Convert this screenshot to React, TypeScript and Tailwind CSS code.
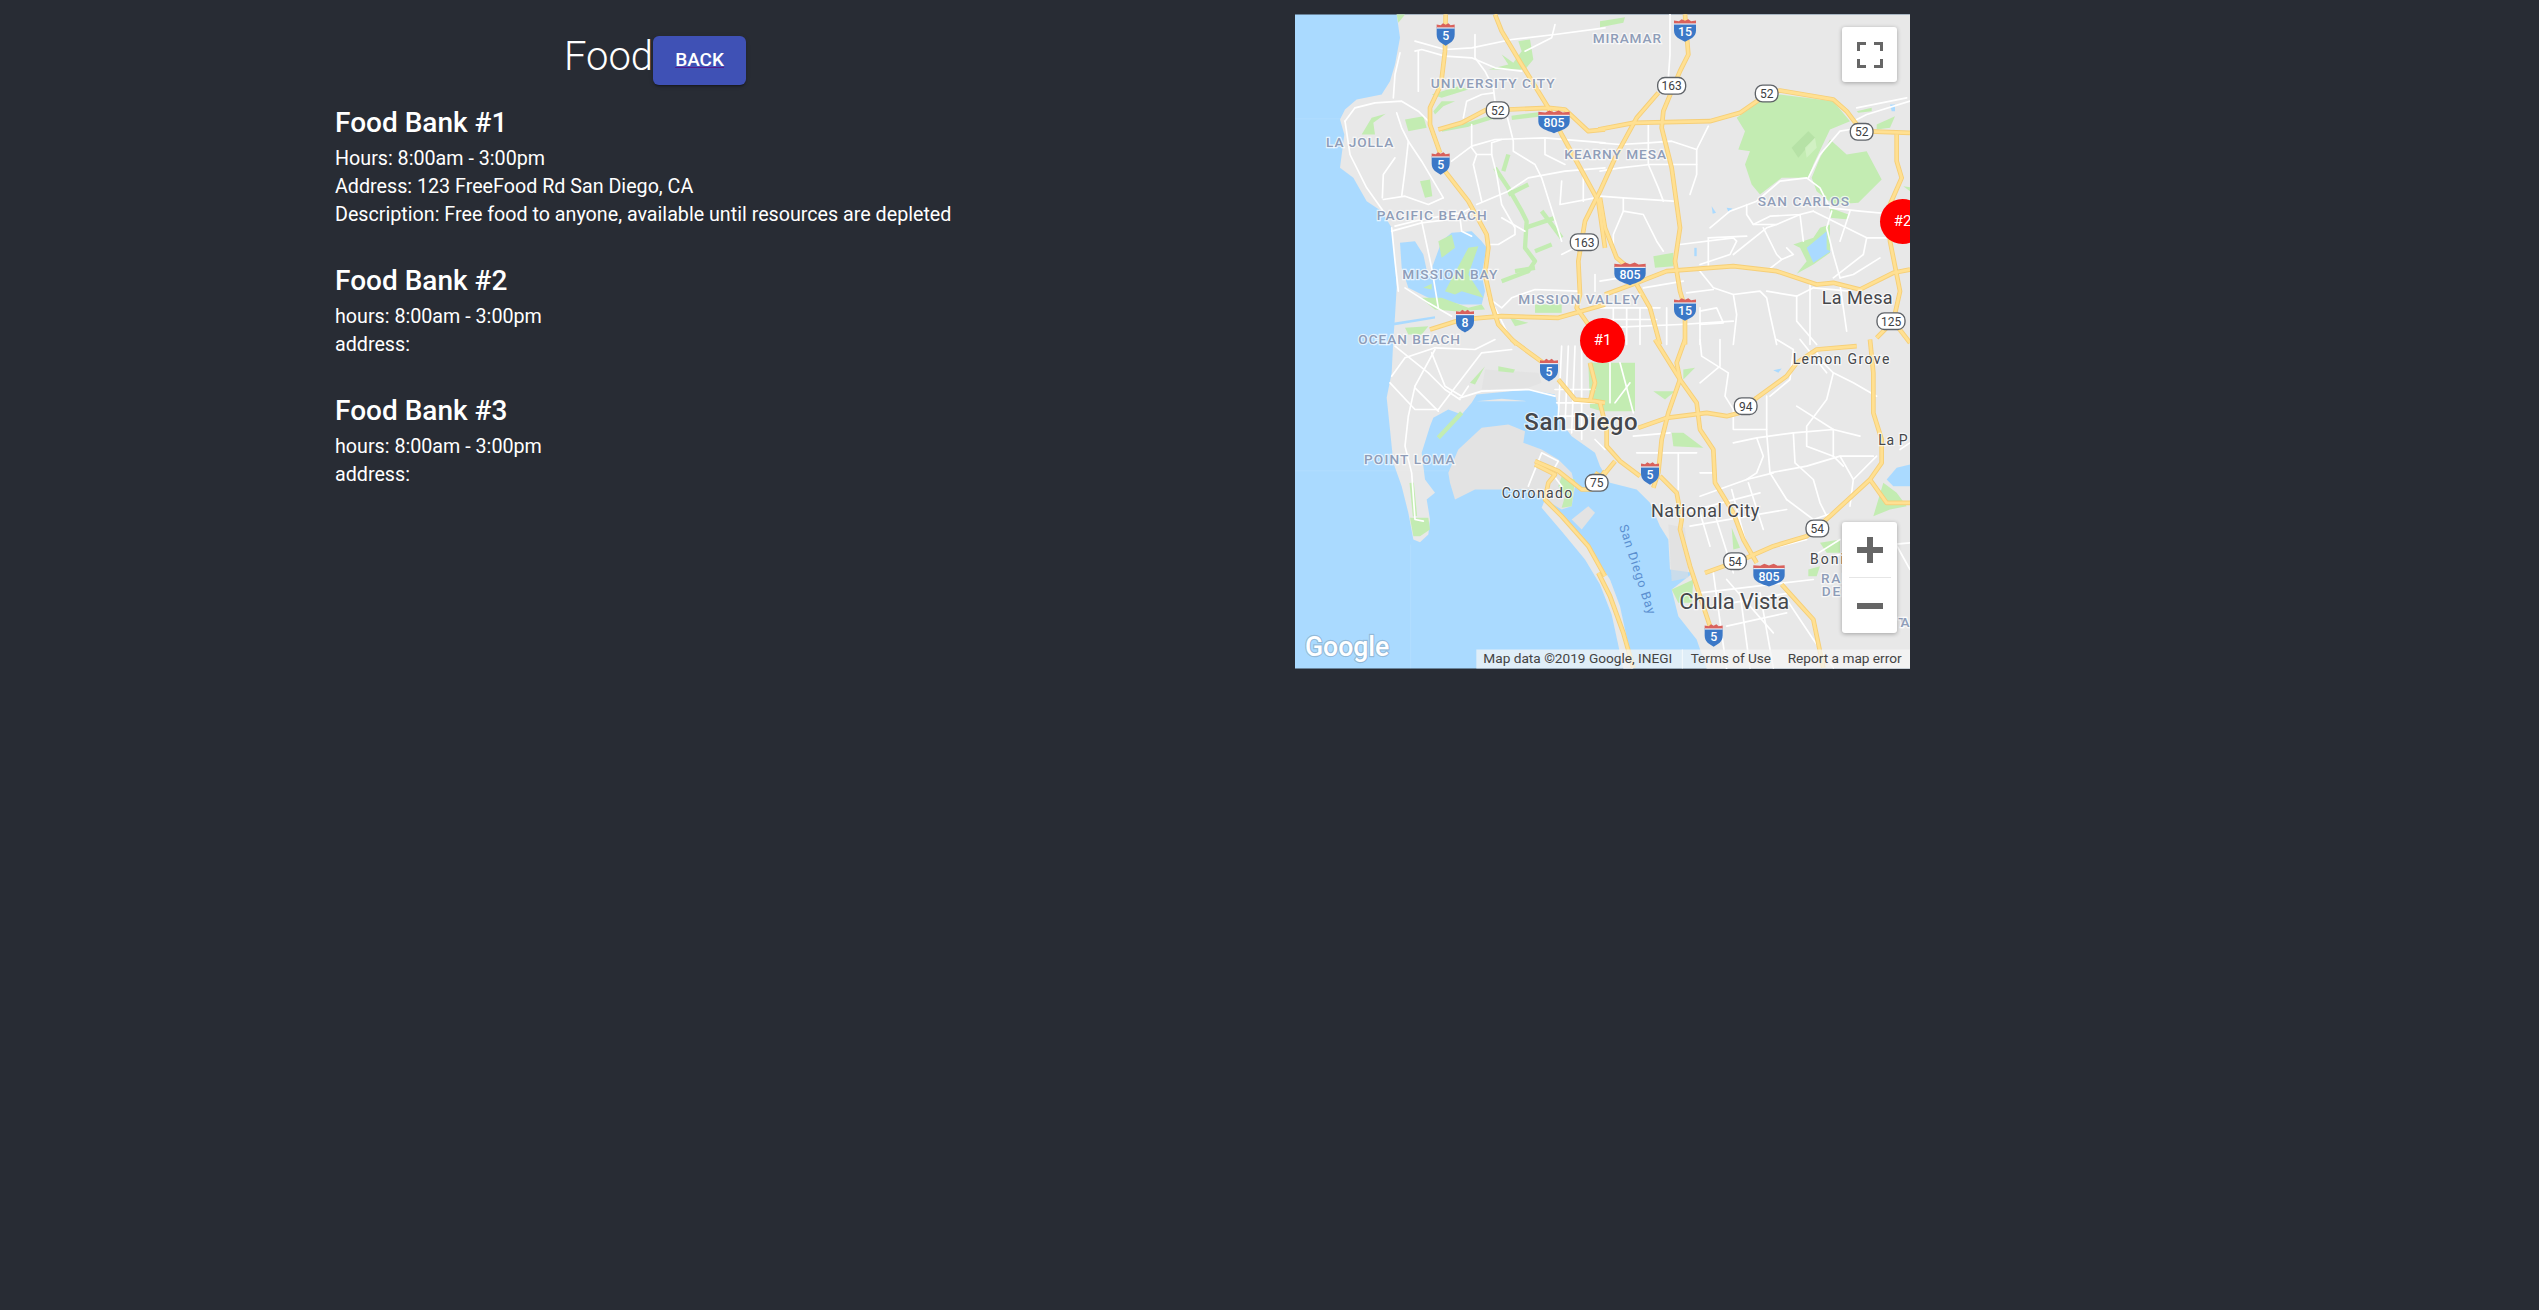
const BANKS = [
  {
    name: 'Food Bank #1',
    lines: [
      'Hours: 8:00am - 3:00pm',
      'Address: 123 FreeFood Rd San Diego, CA',
      'Description: Free food to anyone, available until resources are depleted',
    ],
  },
  { name: 'Food Bank #2', lines: ['hours: 8:00am - 3:00pm', 'address:'] },
  { name: 'Food Bank #3', lines: ['hours: 8:00am - 3:00pm', 'address:'] },
];

// Map geometry is traced at 3x, in four overlapping tiles
type Tile = { dx: number; dy: number; parks: string[]; ribbons: string[]; water: string[]; roads: string[]; highways: string[] };

const TILES: Tile[] = [
  {
    dx: 0,
    dy: 0,
    parks: [
      '580,165 640,150 620,120 655,145 680,110 670,80 705,75 715,135 690,165 640,165',
      '200,360 230,310 272,298 235,325 240,360',
      '330,315 385,305 395,340 340,350',
      '375,500 405,495 412,545 390,550',
      '415,290 440,260 480,260 445,275 420,300',
      '450,830 520,700 550,695 520,780 565,850 500,830 480,840',
      '720,870 800,870 800,895 720,895',
      '645,910 700,925 660,935',
      '385,820 410,808 410,825',
      '330,940 400,935 380,960 340,960',
      '305,0 330,0 310,25',
      '410,240 490,215 520,225 440,250',
      '375,850 440,850 520,880 560,870 570,885 480,890 420,885',
      '430,680 470,660 480,700 440,730',
    ],
    ribbons: [
      '600,460 640,520 680,590 695,620 690,700 720,740 700,770 620,800',
      '640,540 700,510',
      '690,640 780,610',
      '740,590 800,670',
      '720,710 770,690',
      '660,770 720,760',
      '640,420 625,470',
      '440,345 520,330 600,305',
      '650,310 730,300',
    ],
    water: [
      '315,685 360,680 385,720 400,790 440,680 470,655 530,650 560,680 575,700 560,780 570,830 560,870 500,870 400,850 340,820 320,760',
      '275,928 420,905 420,912 300,932',
    ],
    roads: [
      '360,80 450,105 530,100 650,75 780,60 930,40',
      '360,110 380,105 450,125 530,130 600,160 680,170',
      '315,115 300,180 295,250',
      '370,110 370,230',
      '540,60 540,130 570,170 595,220 600,260',
      '780,30 770,70 690,110',
      '150,320 180,280 240,265 320,260 370,290 400,320',
      '150,320 165,420 215,520 265,590',
      '305,295 320,340 340,380 330,470 320,545',
      '300,430 265,480 262,550',
      '265,555 330,545 400,570 445,550',
      '470,440 530,395 600,375 750,370 930,385',
      '530,330 530,400 545,420 590,420 590,385 620,375',
      '545,420 535,450 560,560',
      '505,310 515,260 560,240 595,235',
      '635,300 655,380 655,410 720,450 740,490 800,680',
      '590,420 605,480 620,570 660,640 660,660 610,690 580,690',
      '545,570 640,530 700,490 810,470 930,460',
      '750,370 750,420 810,450',
      '290,650 380,625 500,610 540,590',
      '300,635 380,615 500,595 530,580',
      '380,620 410,760 430,880',
      '330,820 400,865 470,905',
      '580,850 620,880 650,850 720,825 850,830',
      '840,700 800,720',
      '600,880 640,960 660,990',
      '800,500 795,570 900,550',
      '865,470 865,560',
      '340,380 380,440 445,550',
      '290,640 300,740 310,830',
      '495,610 500,650 530,665',
      '900,780 900,830',
      '620,610 690,650',
    ],
    highways: [
      '452,0 450,110 438,210 405,280 405,330 435,415',
      '450,470 520,560 575,660 580,700 570,780 590,870 610,930 665,990',
      '600,0 620,50 680,150 760,280 800,360 850,450 910,560 930,700',
      '915,530 870,620 850,740 855,840 845,880 880,930',
      '430,345 500,325 575,285 640,285 760,280 810,285 880,350 930,345',
      '405,945 500,915 620,905 790,910 930,870',
    ],
  },
  {
    dx: 915,
    dy: 0,
    parks: [
      '0,20 75,8 70,25 0,38',
      '410,310 480,260 540,240 700,260 750,320 690,345 640,450 625,490 545,490 480,540 455,510 435,450 450,410 415,405 435,350',
      '690,375 740,420 800,410 845,495 775,565 700,570 650,530 635,490 660,430',
      '160,725 220,715 220,755 165,760',
      '580,690 640,670 660,640 690,630 690,715 640,750 590,778 620,740 600,700',
      '770,290 815,280 815,290 775,295',
      '690,580 745,600 745,615 690,610',
      '830,330 885,305 870,340 830,345',
      '910,515 930,518 930,530',
    ],
    ribbons: [],
    water: [
      '335,575 348,595 338,598',
      '380,580 398,582 385,592',
      '283,700 290,700 290,725 283,725',
      '870,270 885,270 885,290 875,290',
    ],
    roads: [
      '0,385 60,390 145,385 215,380 290,405 290,480 270,540',
      '145,330 145,450 175,520 190,560',
      '0,470 60,460 150,450 290,450',
      '70,550 70,590 130,600 170,680 190,710',
      '0,545 70,550 220,560',
      '70,590 40,660 40,700',
      '325,335 290,405',
      '210,0 210,120 205,190',
      '240,690 400,670 410,680 390,720 300,750',
      '325,670 440,665',
      '330,640 390,590 470,560 540,500 620,490 660,520 690,580 780,590 890,600',
      '625,490 660,420 720,350 750,345',
      '760,320 800,300 930,260',
      '770,280 920,250',
      '440,570 440,600 460,630 510,605 600,600 640,590',
      '460,630 530,630 500,640 400,720',
      '490,640 530,720 545,735',
      '530,630 600,600 610,680',
      '695,590 680,640 700,720 720,790',
      '750,590 720,680',
      '640,590 800,670 860,670',
      '800,670 790,720 700,790',
      '560,700 580,720 545,735 500,770',
      '840,730 760,780 720,790',
      '300,770 340,820 400,840 410,900 400,990',
      '340,825 260,835',
      '400,840 480,830 500,850 510,900 530,990',
      '500,830 590,845 640,820 750,830',
      '630,810 630,990',
      '590,845 590,920 650,990',
      '720,810 730,880 740,950',
      '300,890 350,880 370,925 300,930',
      '0,880 180,880',
      '0,915 170,915',
      '0,940 240,930 400,920',
      '40,880 40,990',
      '80,880 80,990',
      '120,880 120,990',
      '200,880 200,990',
      '300,880 300,990',
      '890,600 930,605',
      '325,670 325,760',
      '130,820 250,800',
      '0,800 60,790',
    ],
    highways: [
      '0,550 15,640 50,730 85,760',
      '110,810 150,880 180,990',
      '255,0 265,120 240,170 190,290 185,340 215,460 240,640 225,740 240,830 255,880 255,990',
      '175,235 110,310 50,420 0,530',
      '-5,345 100,325 330,320 420,295 500,240 540,228 700,255 740,290 785,350 930,355',
      '890,360 890,440 905,490 870,570 870,680 900,830 880,920 830,970',
      '15,840 110,805 200,770 400,755 530,770 650,810 700,805 780,825 880,775 930,765',
      '880,920 930,985',
    ],
  },
  {
    dx: 0,
    dy: 975,
    parks: [
      '345,535 400,535 405,570 375,590 355,590',
      '525,130 570,80 540,135',
      '610,80 660,90 655,100 610,95',
      '800,410 840,420 830,500 800,505 810,470 790,440',
    ],
    ribbons: ['350,430 360,530', '430,295 500,220'],
    water: [],
    roads: [
      '300,20 400,100 450,150 495,180',
      '290,110 330,55 420,25 540,30 600,0',
      '360,140 420,30',
      '285,130 360,210 430,210 460,170 560,40 650,30',
      '360,140 340,230 330,320 350,400 360,540 385,545',
      '360,145 430,215',
      '410,40 450,140 500,170 520,140',
      '495,175 560,155 700,150 780,170',
      '800,20 790,230',
      '820,20 810,260',
      '840,20 830,280',
      '860,20 860,300',
      '780,150 900,150',
      '785,190 900,190',
      '790,230 880,230',
      '800,270 870,270',
      '700,440 740,340 790,365 770,400 800,440',
      '900,300 930,330',
    ],
    highways: [
      '650,0 690,30 745,70',
      '790,120 840,180 900,185 930,190',
      '885,70 900,130 885,185',
      '930,395 890,450 860,450 790,395 720,365',
      '720,375 780,405 760,430 750,480 800,530 880,620 930,710',
    ],
  },
  {
    dx: 915,
    dy: 975,
    parks: [
      '215,280 250,280 310,325 220,320',
      '215,750 280,720 275,790 235,790',
      '395,565 420,625 400,630',
      '625,690 660,680 650,710 625,710',
      '660,610 720,600 720,640 680,640',
      '820,530 850,430 890,460 920,500 870,510',
      '160,155 225,155 195,180',
      '250,90 285,85 250,120',
    ],
    ribbons: [],
    water: [
      '520,92 545,87 535,100',
      '860,420 890,385 930,375 930,440 880,440',
    ],
    roads: [
      '300,0 305,50 385,100 375,170 400,210 400,270 500,270',
      '500,170 500,280 510,400 560,480',
      '580,280 585,370 640,420 660,490 680,530',
      '400,310 470,295 580,280 700,270 780,290',
      '510,400 620,380 720,350 820,350',
      '470,295 490,350 470,400 440,420',
      '700,100 680,180 620,260 620,320 700,350 730,380',
      '830,170 760,130 700,100 670,70 650,40',
      '300,470 440,420 520,400',
      '250,520 480,460',
      '270,560 560,510',
      '340,700 380,990',
      '380,720 520,880',
      '300,760 640,720',
      '340,800 570,760',
      '380,860 560,820',
      '640,650 720,600',
      '880,600 930,690',
      '530,0 580,30 570,120 510,170',
      '360,0 360,80 300,130',
      '100,290 210,280',
      '110,340 290,340',
      '235,340 235,450',
      '300,400 340,400',
      '395,450 440,620',
      '445,430 490,570',
      '300,520 330,620',
      '340,510 400,700',
      '540,620 620,600',
      '560,480 640,540 700,520',
      '720,350 760,420 750,500',
      '560,780 640,900 700,985',
      '700,650 820,620 930,610',
      '420,760 450,985',
      '480,760 520,985',
      '680,100 600,0',
      '760,420 830,350',
      '900,330 930,310',
      '590,200 700,270',
      '700,270 700,350',
      '30,70 30,190',
      '60,70 100,220',
      '45,190 90,130',
    ],
    highways: [
      '165,0 240,120 290,190 300,270 340,330 345,430 400,520 430,600 470,670',
      '545,735 590,785 640,840 670,985',
      '0,190 20,270 20,320 60,365 120,410',
      '180,410 230,460 245,540 240,570 270,680 330,860',
      '255,0 230,70 240,120 205,220 185,300 175,400 160,445',
      '115,265 200,235 320,220 380,230 420,220 470,175 560,110 590,70 650,30 770,20',
      '-5,700 30,770 70,880 100,985',
      '810,0 820,100 820,220 845,300 845,370 810,420 690,530 620,590 520,620 440,655 315,700',
      '810,420 860,490 930,490',
      '45,365 0,420',
      '-15,400 15,420',
    ],
  },
];

const INTERSTATES = [
  { x: 452, y: 60, label: '5' },
  { x: 437, y: 447, label: '5' },
  { x: 762, y: 1067, label: '5' },
  { x: 1065, y: 1377, label: '5' },
  { x: 1256, y: 1863, label: '5' },
  { x: 510, y: 920, label: '8' },
  { x: 777, y: 322, label: '805' },
  { x: 1005, y: 778, label: '805' },
  { x: 1422, y: 1682, label: '805' },
  { x: 1170, y: 48, label: '15' },
  { x: 1170, y: 885, label: '15' },
];

const ROUTES = [
  { x: 608, y: 287, label: '52' },
  { x: 1415, y: 237, label: '52' },
  { x: 1700, y: 352, label: '52' },
  { x: 868, y: 683, label: '163' },
  { x: 1130, y: 214, label: '163' },
  { x: 1788, y: 920, label: '125' },
  { x: 1352, y: 1175, label: '94' },
  { x: 905, y: 1405, label: '75' },
  { x: 1567, y: 1542, label: '54' },
  { x: 1320, y: 1640, label: '54' },
];

const AREA_LABELS = [
  { t: 'MIRAMAR', x: 893, y: 84, w: 205 },
  { t: 'UNIVERSITY CITY', x: 407, y: 220, w: 372 },
  { t: 'LA JOLLA', x: 93, y: 398, w: 202 },
  { t: 'KEARNY MESA', x: 808, y: 433, w: 305 },
  { t: 'PACIFIC BEACH', x: 245, y: 617, w: 330 },
  { t: 'MISSION BAY', x: 322, y: 792, w: 285 },
  { t: 'MISSION VALLEY', x: 670, y: 868, w: 363 },
  { t: 'OCEAN BEACH', x: 190, y: 988, w: 305 },
  { t: 'POINT LOMA', x: 207, y: 1347, w: 272 },
  { t: 'SAN CARLOS', x: 1388, y: 573, w: 274 },
  { t: 'RANCHO', x: 1578, y: 1705, w: 190 },
  { t: 'DEL REY', x: 1580, y: 1745, w: 190 },
  { t: 'TA', x: 1810, y: 1838, w: 34 },
];

const CITY_LABELS = [
  { t: 'La Mesa', x: 1580, y: 868, w: 213, size: 54, weight: 400 },
  { t: 'Lemon Grove', x: 1493, y: 1047, w: 290, size: 42, weight: 400 },
  { t: 'San Diego', x: 688, y: 1247, w: 340, size: 72, weight: 500 },
  { t: 'Coronado', x: 620, y: 1450, w: 212, size: 42, weight: 400 },
  { t: 'National City', x: 1068, y: 1508, w: 325, size: 54, weight: 400 },
  { t: 'Chula Vista', x: 1153, y: 1783, w: 330, size: 66, weight: 400 },
  { t: 'La P', x: 1750, y: 1292, w: 88, size: 42, weight: 400 },
  { t: 'Bonita', x: 1545, y: 1647, w: 150, size: 42, weight: 400 },
];

function InterstateShield({ x, y, label }: { x: number; y: number; label: string }) {
  const half = label.length === 3 ? 47 : label.length === 2 ? 33 : 27;
  return (
    <g transform={`translate(${x} ${y})`}>
      <path
        d={`M${-half} -22 L${half} -22 L${half} 0 C${half} 20 ${half * 0.45} 26 0 34 C${-half * 0.45} 26 ${-half} 20 ${-half} 0 Z`}
        fill="#3b78c7"
      />
      <path
        d={`M${-half} -20 L${-half} -30 L${-half * 0.55} -28 L${-half * 0.3} -34 L0 -29 L${half * 0.3} -34 L${half * 0.55} -28 L${half} -30 L${half} -20 Z`}
        fill="#d9615c"
      />
      <rect x={-half} y={-21} width={half * 2} height={3} fill="#fff" />
      <text x={0} y={16} textAnchor="middle" fontSize={37} fontWeight={500} fill="#fff">
        {label}
      </text>
    </g>
  );
}

function RouteShield({ x, y, label }: { x: number; y: number; label: string }) {
  const half = label.length === 3 ? 42 : 34;
  return (
    <g transform={`translate(${x} ${y})`}>
      <rect x={-half} y={-25} width={half * 2} height={50} rx={22} fill="#fff" stroke="#5f6368" strokeWidth={4} />
      <text x={0} y={13} textAnchor="middle" fontSize={36} fill="#3c4043">
        {label}
      </text>
    </g>
  );
}

function MapDrawing() {
  return (
    <svg viewBox="0 0 1845 1962" className="absolute inset-0 h-full w-full" fontFamily="Roboto, sans-serif">
      <rect width="1845" height="1962" fill="#aadaff" />
      {/* land */}
      <polygon
        fill="#e8e8e8"
        points="305,0 315,70 300,150 285,200 260,240 185,255 150,285 135,315 148,360 135,460 175,490 215,560 260,590 290,640 300,740 305,820 300,905 295,975 290,1075 275,1150 285,1245 295,1345 320,1415 340,1495 355,1575 375,1583 400,1560 405,1515 395,1455 420,1435 390,1395 380,1315 405,1235 415,1210 460,1185 500,1200 530,1165 545,1140 700,1125 780,1140 800,1225 830,1265 900,1315 915,1355 945,1405 1025,1425 1065,1465 1095,1535 1120,1575 1125,1665 1195,1675 1130,1725 1150,1805 1205,1875 1235,1962 1845,1962 1845,0"
      />
      <polygon
        fill="#e3e3e3"
        points="460,1375 490,1305 560,1240 640,1230 690,1250 685,1285 740,1305 790,1335 830,1375 840,1415 830,1475 800,1485 750,1455 700,1425 540,1425 480,1455 465,1405"
      />
      <polygon
        fill="#e8e8e8"
        points="750,1455 830,1535 900,1625 945,1695 975,1775 1015,1962 985,1962 950,1800 915,1710 870,1635 800,1550 740,1480"
      />
      <polygon fill="#e3e3e3" points="830,1515 880,1475 900,1495 860,1545" />
      <polygon fill="#e3e3e3" points="570,1065 730,1075 740,1105 700,1120 560,1125" />
      <polygon fill="#e8e8e8" points="545,1160 620,1153 695,1160 620,1160" />
      <polygon fill="#dddddd" points="1120,1530 1170,1540 1180,1690 1130,1700" opacity="0.6" />
      {/* balboa park */}
      <polygon fill="#c3ecb2" points="880,1045 1020,1045 1020,1190 920,1190 885,1180" />

      {TILES.map((tile, i) => (
        <g key={i} transform={`translate(${tile.dx} ${tile.dy})`}>
          {tile.water.map((p, j) => (
            <polygon key={j} points={p} fill="#aadaff" />
          ))}
          {tile.parks.map((p, j) => (
            <polygon key={j} points={p} fill="#c3ecb2" />
          ))}
          {tile.ribbons.map((p, j) => (
            <polyline key={j} points={p} fill="none" stroke="#c3ecb2" strokeWidth={13} strokeLinejoin="round" />
          ))}
          {/* lake murray sits on top of its park */}
          {tile.dx === 915 && tile.dy === 0 && (
            <polygon points="620,700 680,650 680,705 692,710 640,745" fill="#aadaff" />
          )}
          {tile.roads.map((p, j) => (
            <polyline key={j} points={p} fill="none" stroke="#fff" strokeWidth={5} strokeLinejoin="round" strokeLinecap="round" />
          ))}
        </g>
      ))}
      {/* mountain shading */}
      <polygon points="1490,400 1540,350 1560,370 1510,430" fill="#a9d89a" opacity="0.5" />
      <polygon points="1530,400 1560,370 1565,400 1535,430" fill="#d7f3ca" opacity="0.7" />

      {/* tile seams */}
      <line x1="0" y1="313" x2="140" y2="313" stroke="#fff" strokeOpacity="0.15" strokeWidth="2" />
      <line x1="0" y1="1369" x2="460" y2="1369" stroke="#fff" strokeOpacity="0.15" strokeWidth="2" />
      <line x1="347" y1="1590" x2="347" y2="1962" stroke="#fff" strokeOpacity="0.15" strokeWidth="2" />

      {TILES.map((tile, i) => (
        <g key={i} transform={`translate(${tile.dx} ${tile.dy})`}>
          {tile.highways.map((p, j) => (
            <polyline key={j} points={p} fill="none" stroke="#f6cf78" strokeWidth={14} strokeLinejoin="round" />
          ))}
        </g>
      ))}
      {TILES.map((tile, i) => (
        <g key={i} transform={`translate(${tile.dx} ${tile.dy})`}>
          {tile.highways.map((p, j) => (
            <polyline key={j} points={p} fill="none" stroke="#ffe092" strokeWidth={8.5} strokeLinejoin="round" />
          ))}
        </g>
      ))}

      {AREA_LABELS.map((l) => (
        <text
          key={l.t}
          x={l.x}
          y={l.y}
          textLength={l.w}
          lengthAdjust="spacing"
          fontSize={41}
          fontWeight={500}
          fill="#8f9db8"
          stroke="#fff"
          strokeOpacity={0.7}
          strokeWidth={7}
          paintOrder="stroke"
        >
          {l.t}
        </text>
      ))}
      {CITY_LABELS.map((l) => (
        <text
          key={l.t}
          x={l.x}
          y={l.y}
          textLength={l.w}
          lengthAdjust="spacing"
          fontSize={l.size}
          fontWeight={l.weight}
          fill="#45474b"
          stroke="#fff"
          strokeOpacity={0.7}
          strokeWidth={7}
          paintOrder="stroke"
        >
          {l.t}
        </text>
      ))}
      <text
        transform="translate(972 1535) rotate(72)"
        textLength={280}
        lengthAdjust="spacing"
        fontSize={38}
        fill="#5a8fd0"
      >
        San Diego Bay
      </text>

      {INTERSTATES.map((s) => (
        <InterstateShield key={`${s.x}-${s.y}`} {...s} />
      ))}
      {ROUTES.map((s) => (
        <RouteShield key={`${s.x}-${s.y}`} {...s} />
      ))}

      {/* attribution */}
      <rect x="544" y="1905" width="1301" height="57" fill="#f5f5f5" fillOpacity="0.72" />
      <line x1="1162" y1="1905" x2="1162" y2="1962" stroke="#fff" strokeOpacity="0.7" strokeWidth="3" />
      <text x="565" y="1945" fontSize={40} fill="#444" textLength={567} lengthAdjust="spacingAndGlyphs">
        Map data ©2019 Google, INEGI
      </text>
      <text x="1187" y="1945" fontSize={40} fill="#444" textLength={241} lengthAdjust="spacingAndGlyphs">
        Terms of Use
      </text>
      <text x="1478" y="1945" fontSize={40} fill="#444" textLength={342} lengthAdjust="spacingAndGlyphs">
        Report a map error
      </text>

      <text
        x="30"
        y="1925"
        fontSize={84}
        fontWeight={500}
        fill="#fff"
        stroke="#5b6b7a"
        strokeOpacity={0.3}
        strokeWidth={7}
        paintOrder="stroke"
        textLength={253}
        lengthAdjust="spacingAndGlyphs"
      >
        Google
      </text>
    </svg>
  );
}

function Marker({ className, label }: { className: string; label: string }) {
  return (
    <div
      className={`absolute flex h-[45px] w-[45px] items-center justify-center rounded-full bg-[#ff0000] text-[15px] text-white ${className}`}
    >
      {label}
    </div>
  );
}

export default function App() {
  return (
    <div className="min-h-screen bg-[#282c34] font-['Roboto',sans-serif] text-white">
      <div className="flex items-start pl-[335px] pt-[14px]">
        <div className="w-[640px]">
          <div className="mb-[5px] mt-[10px] flex h-[72px] items-center justify-center">
            <h1 className="mb-[6px] text-[40px] font-light leading-[48px]">Food</h1>
            <a
              href="#back"
              className="flex h-[49px] w-[93px] items-center justify-center rounded-[6px] bg-[#3f51b5] text-[19px] font-medium text-white underline decoration-[#551a8b] shadow-[0_3px_1px_-2px_rgba(0,0,0,0.2),0_2px_2px_0_rgba(0,0,0,0.14),0_1px_5px_0_rgba(0,0,0,0.12)]"
            >
              BACK
            </a>
          </div>
          {BANKS.map((bank) => (
            <section key={bank.name} className="mb-[30px]">
              <h2 className="text-[28px] font-medium leading-[44px]">{bank.name}</h2>
              {bank.lines.map((line) => (
                <p key={line} className="text-[19.7px] leading-[28px]">
                  {line}
                </p>
              ))}
            </section>
          ))}
        </div>

        <div className="relative ml-[320px] h-[655px] w-[615px] overflow-hidden">
          <MapDrawing />
          <Marker className="left-[285px] top-[304px]" label="#1" />
          <Marker className="left-[585px] top-[185px]" label="#2" />

          <button
            aria-label="Toggle fullscreen view"
            className="absolute left-[547px] top-[13px] flex h-[55px] w-[55px] items-center justify-center rounded-[3px] bg-white shadow-[0_1px_4px_rgba(0,0,0,0.3)]"
          >
            <svg viewBox="0 0 26 26" className="h-[26px] w-[26px]" fill="#666">
              <path d="M0 0h9v3H3v6H0zM17 0h9v9h-3V3h-6zM0 17h3v6h6v3H0zM23 17h3v9h-9v-3h6z" />
            </svg>
          </button>

          <div className="absolute left-[547px] top-[508px] flex h-[111px] w-[55px] flex-col items-center rounded-[3px] bg-white shadow-[0_1px_4px_rgba(0,0,0,0.3)]">
            <button aria-label="Zoom in" className="flex h-[55px] w-full items-center justify-center">
              <svg viewBox="0 0 26 26" className="h-[26px] w-[26px]" fill="#666">
                <path d="M10 0h6v10h10v6H16v10h-6V16H0v-6h10z" />
              </svg>
            </button>
            <div className="h-px w-[42px] bg-[#e6e6e6]" />
            <button aria-label="Zoom out" className="flex h-[55px] w-full items-center justify-center">
              <svg viewBox="0 0 26 26" className="h-[26px] w-[26px]" fill="#666">
                <path d="M0 10h26v6H0z" />
              </svg>
            </button>
          </div>
        </div>
      </div>
    </div>
  );
}
